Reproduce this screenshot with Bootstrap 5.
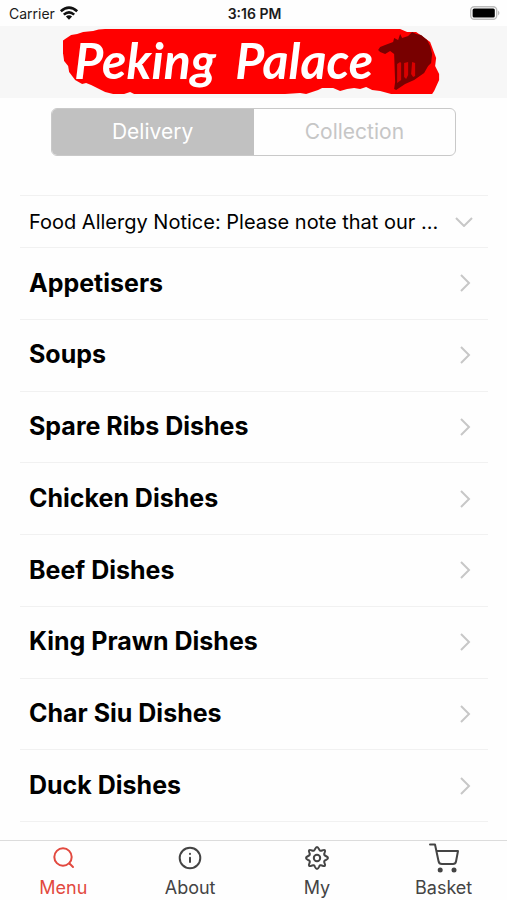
<!DOCTYPE html>
<html lang="en">
<head>
<meta charset="utf-8">
<meta name="viewport" content="width=device-width, initial-scale=1">
<title>Peking Palace</title>
<link href="https://cdn.jsdelivr.net/npm/bootstrap@5.3.0/dist/css/bootstrap.min.css" rel="stylesheet">
<style>
  body { font-family: Inter, "Liberation Sans", sans-serif; color: #000; background: #fefefe; }
  .status-bar { height: 26px; padding: 0 7px 0 9px; font-size: 14px; color: #1b1b1b; }
  .brand-bar { background: #f7f7f7; height: 72px; }
  .brand-logo { width: 75%; height: 68px; }
  .brand-logo text { font: italic 700 50px Lato, sans-serif; fill: #fff; }
  .order-type { width: 80%; height: 48px; margin-top: 10px; border: 1px solid #c9c9c9; border-radius: 6px; }
  .order-type .btn { --bs-btn-color: #c6c6c6; --bs-btn-active-bg: #c1c1c1; --bs-btn-active-color: #fff; --bs-btn-hover-color: #aaa; font-size: 21px; border: 0; border-radius: 0; padding: 0; display: flex; align-items: center; justify-content: center; }
  .menu-list { margin: 39px 19px 18px 20px; border-top: 1px solid #f1f1f1; }
  .menu-row { border: 0; border-bottom: 1px solid #f1f1f1; background: none; color: #000; text-decoration: none; padding: 0 17px 0 9px; text-align: left; }
  .notice-row { height: 52px; font-size: 20px; padding-right: 15px; }
  .dish-row { font-size: 25px; font-weight: 700; min-height: 56px; }
  .arrow { fill: none; stroke: #c7c7c7; stroke-width: 2; flex: none; }
  .tab-bar { height: 60px; background: #fefefe; border-top: 1px solid #dcdcdc; }
  .tab-item { color: #444; font-size: 18px; line-height: 24px; text-decoration: none; }
  .tab-item.active { color: #e2493f; }
  .tab-item svg { display: block; fill: none; stroke: currentColor; stroke-width: 2; stroke-linecap: round; stroke-linejoin: round; }
</style>
</head>
<body>
<div class="d-flex flex-column min-vh-100">
  <div class="status-bar row g-0 align-items-center">
    <div class="col d-flex align-items-center gap-1">
      <span>Carrier</span>
      <svg width="20" height="15" viewBox="0 0 20 15" fill="none" stroke="#111" stroke-width="2.6" aria-label="Wi-Fi"><path d="M1.8 5.2Q10-2 18.2 5.2M4.8 8.6Q10 4 15.2 8.6"/><path d="M6.9 10.6Q10 8 13.1 10.6L10 13.8Z" fill="#111" stroke="none"/></svg>
    </div>
    <div class="col-auto fw-semibold">3:16 PM</div>
    <div class="col d-flex justify-content-end">
      <svg width="30" height="14" viewBox="0 0 30 14" aria-label="Battery full"><rect x=".7" y=".7" width="26" height="12.6" rx="3.5" fill="#fff" stroke="#bbb" stroke-width="1.4"/><rect x="2.6" y="2.6" width="22.2" height="8.8" rx="1.5"/><path d="M28 4.5Q31 7 28 9.5Z" fill="#bbb"/></svg>
    </div>
  </div>

  <header class="brand-bar d-flex justify-content-center align-items-center">
    <svg class="brand-logo" viewBox="3 0 380 68" role="img" aria-label="Peking Palace">
      <path fill="#f00" d="M33 3Q38 1 45 1H340L347 4 356 4 370 14 376 30 375 38 379 46 379 52 374 63 372 66H331L320 63 312 62 306 59 300 61 294 60 287 61 280 63 273 60 262 60 258 62 246 66 240 65 225 66H74L70 64 64 66H53L45 64 37 60 31 57 26 55 22 56 15 52 9 44 8 38 4 33 3 26 1 21 1 14 5 11 11 7 17 6 23 4Z"/>
      <text x="14" y="51">Peking</text>
      <text x="175" y="51">Palace</text>
      <path fill="#780000" d="M318 22 320 19 325 17 333 14 334 10 338 12 340 6 342 10 348 8 352 4 356 6 361 7 367 12 370 18 372 26 371 35 368 38 364 45 354 52 345 56 336 62 334 61 335 54 334 26 330 23 325 26 320 24Z"/>
      <path fill="#d80000" d="M337 36 340 34 341 35V52L337 55ZM344 35 348 34V47L346 51 344 49ZM352 34 355 35V48L353 49 351 46Z"/>
    </svg>
  </header>

  <main class="d-flex flex-column flex-grow-1">
    <div class="order-type d-flex mx-auto overflow-hidden" role="group" aria-label="Order type">
      <button type="button" class="btn active w-50" aria-pressed="true">Delivery</button>
      <button type="button" class="btn w-50" aria-pressed="false">Collection</button>
    </div>

    <div class="menu-list d-flex flex-column flex-grow-1">
      <button type="button" class="menu-row notice-row d-flex align-items-center justify-content-between" aria-expanded="false">
        <span>Food Allergy Notice: Please note that our ...</span>
        <svg class="arrow" width="18" height="10" viewBox="0 0 18 10"><path d="M1 1 9 9 17 1"/></svg>
      </button>
      <a href="#appetisers" class="menu-row dish-row d-flex flex-fill align-items-center justify-content-between">Appetisers<svg class="arrow" width="12" height="18" viewBox="0 0 12 18"><path d="M2 1 10 9 2 17"/></svg></a>
      <a href="#soups" class="menu-row dish-row d-flex flex-fill align-items-center justify-content-between">Soups<svg class="arrow" width="12" height="18" viewBox="0 0 12 18"><path d="M2 1 10 9 2 17"/></svg></a>
      <a href="#spare-ribs" class="menu-row dish-row d-flex flex-fill align-items-center justify-content-between">Spare Ribs Dishes<svg class="arrow" width="12" height="18" viewBox="0 0 12 18"><path d="M2 1 10 9 2 17"/></svg></a>
      <a href="#chicken" class="menu-row dish-row d-flex flex-fill align-items-center justify-content-between">Chicken Dishes<svg class="arrow" width="12" height="18" viewBox="0 0 12 18"><path d="M2 1 10 9 2 17"/></svg></a>
      <a href="#beef" class="menu-row dish-row d-flex flex-fill align-items-center justify-content-between">Beef Dishes<svg class="arrow" width="12" height="18" viewBox="0 0 12 18"><path d="M2 1 10 9 2 17"/></svg></a>
      <a href="#king-prawn" class="menu-row dish-row d-flex flex-fill align-items-center justify-content-between">King Prawn Dishes<svg class="arrow" width="12" height="18" viewBox="0 0 12 18"><path d="M2 1 10 9 2 17"/></svg></a>
      <a href="#char-siu" class="menu-row dish-row d-flex flex-fill align-items-center justify-content-between">Char Siu Dishes<svg class="arrow" width="12" height="18" viewBox="0 0 12 18"><path d="M2 1 10 9 2 17"/></svg></a>
      <a href="#duck" class="menu-row dish-row d-flex flex-fill align-items-center justify-content-between">Duck Dishes<svg class="arrow" width="12" height="18" viewBox="0 0 12 18"><path d="M2 1 10 9 2 17"/></svg></a>
    </div>
  </main>

  <nav class="tab-bar d-flex sticky-bottom" aria-label="Main">
    <a href="#menu" class="tab-item active col d-flex flex-column align-items-center" aria-current="page">
      <svg width="34" height="35" viewBox="0 0 34 35"><circle cx="17" cy="16" r="8.7"/><path d="M23.500 22.500 27 26"/></svg>
      Menu
    </a>
    <a href="#about" class="tab-item col d-flex flex-column align-items-center">
      <svg width="34" height="35" viewBox="0 0 34 35"><circle cx="17" cy="17" r="10.3"/><path d="M17 16.8V21M17 12.8V13"/></svg>
      About
    </a>
    <a href="#my" class="tab-item col d-flex flex-column align-items-center">
      <svg width="34" height="35" viewBox="0 0 34 35"><circle cx="17" cy="17" r="3.2"/><path d="M15 8.2Q17 3.800 19 8.200Q20 10.600 22 9.500Q26.500 7.500 24.500 12Q23.400 14 25.800 15Q30.200 17 25.800 19Q23.400 20 24.500 22Q26.500 26.500 22 24.500Q20 23.400 19 25.800Q17 30.200 15 25.800Q14 23.400 12 24.500Q7.500 26.500 9.500 22Q10.600 20 8.200 19Q3.800 17 8.200 15Q10.600 14 9.500 12Q7.500 7.500 12 9.500Q14 10.600 15 8.200Z"/></svg>
      My
    </a>
    <a href="#basket" class="tab-item col d-flex flex-column align-items-center">
      <svg width="34" height="35" viewBox="0 0 34 35"><path d="M3 3.500H8L11.500 20Q12 23 15 23H26Q28.500 23 29 20.500L31 10H9.500"/><g fill="currentColor" stroke="none"><circle cx="13.200" cy="29" r="2.500"/><circle cx="27" cy="29" r="2.500"/></g></svg>
      Basket
    </a>
  </nav>
</div>
<script src="https://cdn.jsdelivr.net/npm/bootstrap@5.3.0/dist/js/bootstrap.bundle.min.js"></script>
</body>
</html>
